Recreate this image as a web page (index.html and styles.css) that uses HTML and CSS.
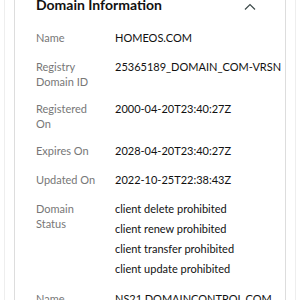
FILE: index.html
```html
<!DOCTYPE html>
<html lang="en">
<head>
    <meta charset="UTF-8">
    <meta name="viewport" content="width=device-width, initial-scale=1.0">
    <title>Domain Information</title>
    <link rel="stylesheet" href="styles.css">
</head>
<body>
    <div class="panel">
        <div class="card">
            <div class="card-head">
                <h2>Domain Information</h2>
                <svg class="chevron" width="12" height="8" viewBox="0 0 12 8">
                    <path d="M1 6.5 L6 1.5 L11 6.5" fill="none" stroke="#3d4a4a" stroke-width="1.2"/>
                </svg>
            </div>

            <div class="row">
                <div class="label">Name</div>
                <div class="value">HOMEOS.COM</div>
            </div>
            <div class="row">
                <div class="label">Registry Domain ID</div>
                <div class="value">25365189_DOMAIN_COM-VRSN</div>
            </div>
            <div class="row">
                <div class="label">Registered On</div>
                <div class="value">2000-04-20T23:40:27Z</div>
            </div>
            <div class="row">
                <div class="label">Expires On</div>
                <div class="value">2028-04-20T23:40:27Z</div>
            </div>
            <div class="row">
                <div class="label">Updated On</div>
                <div class="value">2022-10-25T22:38:43Z</div>
            </div>
            <div class="row">
                <div class="label">Domain Status</div>
                <div class="value">
                    <div class="status">client delete prohibited</div>
                    <div class="status">client renew prohibited</div>
                    <div class="status">client transfer prohibited</div>
                    <div class="status">client update prohibited</div>
                </div>
            </div>
            <div class="row">
                <div class="label">Name</div>
                <div class="value">NS21.DOMAINCONTROL.COM</div>
            </div>
        </div>
    </div>
</body>
</html>
```

FILE: styles.css
```css
body { margin: 0; font-family: Lato, "Liberation Sans", Arial, sans-serif; background: #fff; color: #111; }
.panel { margin: 0 4px; padding: 0 9px; border-left: 1px solid #eee; border-right: 1px solid #eee; height: 300px; }
.card { border-left: 1px solid #ddd; border-right: 1px solid #ddd; padding: 0 21px; height: 300px; overflow: hidden; }
.card-head { display: flex; justify-content: space-between; align-items: center; margin-top: -6px; height: 22px; margin-bottom: 12px; }
.card-head h2 { margin: 0; font-size: 14px; font-weight: 700; line-height: 22px; color: #111; }
.chevron { margin-right: 8px; margin-top: 3px; }
.row { display: grid; grid-template-columns: 79px 1fr; margin-bottom: 10px; font-size: 11px; }
.label { color: #777; line-height: 15px; padding-top: 2px; padding-right: 19px; }
.value { line-height: 19px; color: #111; white-space: nowrap; }
.status { line-height: 20px; }
```
